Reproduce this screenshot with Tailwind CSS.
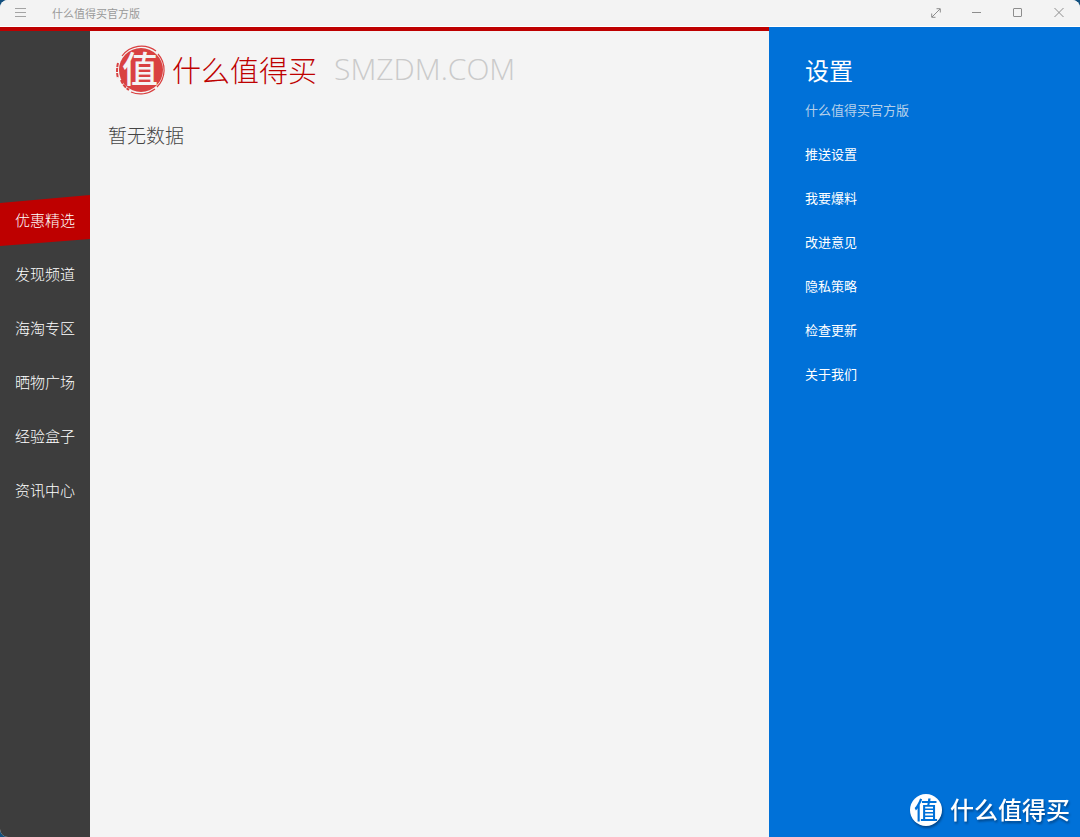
<!DOCTYPE html>
<html lang="zh-CN">
<head>
<meta charset="utf-8">
<meta name="viewport" content="width=device-width, initial-scale=1">
<title>什么值得买官方版</title>
<script src="https://cdn.jsdelivr.net/npm/@tailwindcss/browser@4"></script>
</head>
<body class="bg-[#12507f] font-['Noto_Sans_CJK_SC',sans-serif]">
<div class="flex min-h-screen flex-col overflow-hidden rounded-t-lg rounded-bl-lg bg-[#f4f4f4]">
  <header class="flex h-[27px] items-center border-b border-white bg-[#f3f3f3] pr-px pl-[15px] text-[#8d8d8d]">
    <button aria-label="菜单" class="mr-[26px]">
      <svg width="11" height="10" viewBox="0 0 11 10" fill="none" stroke="#a3a3a3"><path d="M0 .5h11M0 4.5h11M0 8.5h11"/></svg>
    </button>
    <h1 class="flex-1 text-[11px] leading-4 text-[#999]">什么值得买官方版</h1>
    <div class="flex">
      <button aria-label="全屏" class="flex h-6 w-[41px] items-center justify-center">
        <svg width="10" height="10" viewBox="0 0 10 10" fill="none" stroke="#8d8d8d"><path d="M1 9 9 1M5.5 .7H9.3V4.5M.7 5.5V9.3H4.5"/></svg>
      </button>
      <button aria-label="最小化" class="flex h-6 w-[41px] items-center justify-center">
        <svg width="9" height="9" viewBox="0 0 9 9" stroke="#8d8d8d"><path d="M0 3.5h9"/></svg>
      </button>
      <button aria-label="最大化" class="flex h-6 w-[41px] items-center justify-center">
        <svg width="9" height="10" viewBox="0 0 9 10" fill="none" stroke="#8d8d8d"><rect x=".5" y=".5" width="8" height="8" rx=".5"/></svg>
      </button>
      <button aria-label="关闭" class="flex h-6 w-[41px] items-center justify-center">
        <svg width="10" height="10" viewBox="0 0 10 10" stroke="#8d8d8d"><path d="M.5 0l9 9M9.5 0l-9 9"/></svg>
      </button>
    </div>
  </header>

  <div class="flex flex-1">
    <div class="flex flex-1 border-t-4 border-[#be0000]">
      <nav aria-label="频道" class="flex w-[90px] shrink-0 flex-col bg-[#3d3d3d] pt-[162px] text-[15px] leading-[54px] font-light text-white">
        <a href="#" class="block bg-[#be0000] pl-[15px] [clip-path:polygon(0_10px,100%_2px,100%_46px,0_53px)]">优惠精选</a>
        <a href="#" class="block pl-[15px]">发现频道</a>
        <a href="#" class="block pl-[15px]">海淘专区</a>
        <a href="#" class="block pl-[15px]">晒物广场</a>
        <a href="#" class="block pl-[15px]">经验盒子</a>
        <a href="#" class="block pl-[15px]">资讯中心</a>
      </nav>
      <main class="flex-1 px-[18px] pt-3">
        <div class="flex items-center pl-2">
          <svg class="mr-[6px] overflow-visible" width="50" height="52" viewBox="0 0 50 52" role="img" aria-label="值">
            <circle cx="25" cy="27" r="22" fill="#d94141"/>
            <path d="M6 13A24 24 0 0 1 40 8M42 11A24 24 0 0 1 41 44M39 46A24 24 0 0 1 15 49" fill="none" stroke="#d94141" stroke-width="1.2"/>
            <path d="M2 20q-2 8 0 15M5 37q3 7 8 10" fill="none" stroke="#d94141" stroke-width="2" stroke-dasharray="4 1"/>
            <text x="24" y="40" text-anchor="middle" font-size="36" font-weight="500" fill="#f4f4f4" aria-hidden="true">值</text>
          </svg>
          <span class="text-[29px] leading-10 font-light text-[#be0000]">什么值得买</span>
          <span class="ml-[17px] font-['Open_Sans',sans-serif] text-[30px] leading-10 font-light text-[#cacaca]">SMZDM.COM</span>
        </div>
        <p class="mt-6 text-[19px] leading-8 font-light text-[#444]">暂无数据</p>
      </main>
    </div>

    <aside class="flex w-[311px] shrink-0 flex-col bg-[#0071d8] pl-9 text-white">
      <h2 class="mt-[23px] text-2xl leading-10">设置</h2>
      <p class="mt-2 text-[13px] leading-6 text-[#b5d0ea]">什么值得买官方版</p>
      <nav aria-label="设置" class="mt-[10px] flex flex-col items-start text-[13px] leading-[44px]">
        <a href="#">推送设置</a>
        <a href="#">我要爆料</a>
        <a href="#">改进意见</a>
        <a href="#">隐私策略</a>
        <a href="#">检查更新</a>
        <a href="#">关于我们</a>
      </nav>
      <div class="mt-auto flex items-center self-end pr-[10px] pb-[10px] drop-shadow-[1px_2px_1px_#00478c]">
        <svg class="mr-[7px] overflow-visible" width="34" height="34" viewBox="0 0 34 34" role="img" aria-label="值">
          <circle cx="17" cy="18" r="16" fill="#fff"/>
          <text x="17" y="27" text-anchor="middle" font-size="24" font-weight="500" fill="#0071d8" aria-hidden="true">值</text>
        </svg>
        <span class="text-2xl leading-9 font-medium">什么值得买</span>
      </div>
    </aside>
  </div>
</div>
</body>
</html>
